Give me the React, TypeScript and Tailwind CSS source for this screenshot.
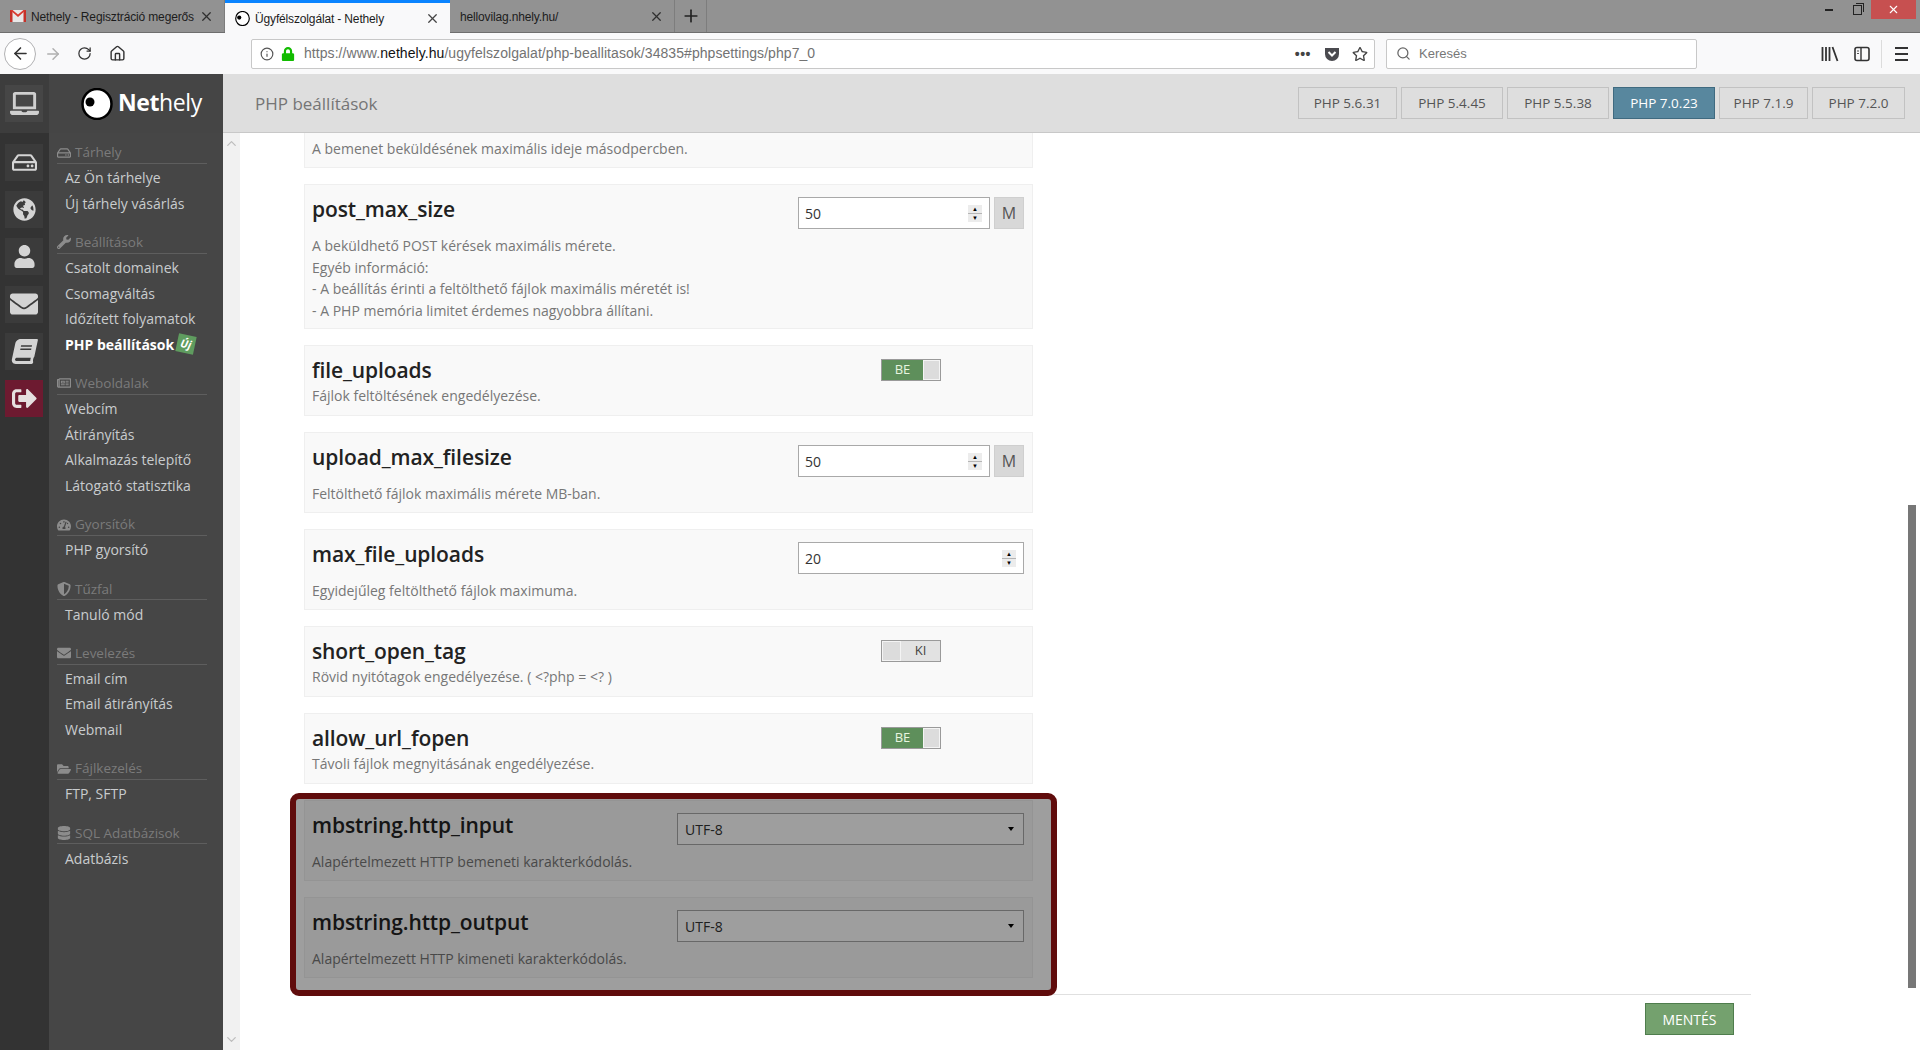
import type { ReactNode } from "react";
import {
  FaBook,
  FaDatabase,
  FaEnvelope,
  FaFolderOpen,
  FaGlobeAmericas,
  FaLaptop,
  FaLock,
  FaRegHdd,
  FaRegNewspaper,
  FaRegStar,
  FaShieldAlt,
  FaSignOutAlt,
  FaTachometerAlt,
  FaUser,
  FaWrench,
} from "react-icons/fa";
import { FiSearch } from "react-icons/fi";
import {
  LuArrowLeft,
  LuArrowRight,
  LuChevronDown,
  LuChevronUp,
  LuHouse,
  LuInfo,
  LuPlus,
  LuRotateCw,
  LuX,
} from "react-icons/lu";

const browserFont = "font-['Liberation_Sans',sans-serif]";
const pageFont = "font-['Open_Sans',sans-serif]";

// small eye logo, used in the tab and in the sidebar
const EyeLogo = ({ className }: { className: string }) => (
  <svg viewBox="0 0 32 32" className={className}>
    <ellipse cx="16" cy="16" rx="14.5" ry="15" fill="#fff" stroke="#000" strokeWidth="2.5" />
    <circle cx="9" cy="14" r="4.5" fill="#000" />
  </svg>
);

const GmailIcon = () => (
  <svg viewBox="0 0 16 12" className="h-[12px] w-[16px] shrink-0">
    <rect width="16" height="12" fill="#e8e8e8" />
    <path d="M0 0h2.5v12H0zM13.5 0H16v12h-2.5z" fill="#c5322a" />
    <path d="M0 0h2.5L8 4.5 13.5 0H16L8 7z" fill="#d93a30" />
  </svg>
);

const PocketIcon = () => (
  <svg viewBox="0 0 16 16" className="h-[16px] w-[16px]">
    <path d="M1 2h14v6a7 7 0 0 1-14 0z" fill="#4a4a4f" />
    <path d="M4.5 6 8 9.5 11.5 6" fill="none" stroke="#fff" strokeWidth="2" />
  </svg>
);

const LibraryIcon = () => (
  <svg viewBox="0 0 18 16" className="h-[16px] w-[18px]">
    <path d="M1.5 1v14M5 1v14M8.5 1v14M11.5 1l5 14" stroke="#333" strokeWidth="1.8" fill="none" />
  </svg>
);

const SidebarIcon = () => (
  <svg viewBox="0 0 16 16" className="h-[16px] w-[16px]">
    <rect x="1" y="1.5" width="14" height="13" rx="2" fill="none" stroke="#333" strokeWidth="1.6" />
    <path d="M7 2v12" stroke="#333" strokeWidth="1.4" />
    <path d="M3 5h2M3 7.5h2" stroke="#555" strokeWidth="1" />
  </svg>
);

type TabProps = {
  icon?: ReactNode;
  title: string;
  active?: boolean;
};

const BrowserTab = ({ icon, title, active }: TabProps) => (
  <div
    className={`flex w-[225px] items-center pl-[10px] pr-[10px] ${
      active ? "h-[33px] border-t-[3px] border-[#0a84ff] bg-[#f9f9fa]" : "h-[32px] border-r border-[#7d7d7d]"
    }`}
  >
    {icon}
    <span
      className={`flex-1 whitespace-nowrap pt-px text-[12px] tracking-[-0.15px] text-[#1c1c1c] ${
        icon ? "ml-[5px]" : ""
      }`}
    >
      {title}
    </span>
    <LuX className={`ml-[4px] shrink-0 text-[15px] ${active ? "text-[#444]" : "text-[#2f2f2f]"}`} />
  </div>
);

const BrowserChrome = () => (
  <div className={browserFont}>
    <div className="flex h-[33px] items-start border-b border-[#6e6e6e] bg-[#929292]">
      <BrowserTab icon={<GmailIcon />} title="Nethely - Regisztráció megerős" />
      <BrowserTab icon={<EyeLogo className="h-[15px] w-[15px] shrink-0" />} title="Ügyfélszolgálat - Nethely" active />
      <BrowserTab title="hellovilag.nhely.hu/" />
      <div className="flex h-[32px] w-[32px] items-center justify-center border-r border-[#7d7d7d]">
        <LuPlus className="text-[20px] text-[#222]" />
      </div>
      <div className="ml-auto mr-[4px] flex h-[19px] items-center">
        <div className="mr-[20px] h-[2px] w-[8px] bg-[#222]" />
        <div className="relative mr-[9px] h-[10px] w-[9px] border border-[#222]">
          <div className="absolute -right-[3px] -top-[3px] h-[9px] w-[8px] border-r border-t border-[#222]" />
        </div>
        <div className="flex h-[19px] w-[45px] items-center justify-center bg-[#c75050]">
          <LuX className="text-[13px] text-white" />
        </div>
      </div>
    </div>
    <div className="flex h-[41px] items-center bg-[#f9f9fa] pl-[4px]">
      <div className="flex h-[32px] w-[32px] items-center justify-center rounded-full border border-[#b1b1b3] bg-white">
        <LuArrowLeft className="text-[19px] text-[#333]" />
      </div>
      <LuArrowRight className="ml-[8px] text-[18px] text-[#b0b0b0]" />
      <LuRotateCw className="ml-[15px] text-[15px] text-[#333]" />
      <LuHouse className="ml-[17px] text-[17px] text-[#333]" />
      <div className="ml-[125px] flex h-[30px] w-[1124px] items-center rounded-[2px] border border-[#c8c8c8] bg-white pl-[8px]">
        <LuInfo className="text-[14px] text-[#555]" />
        <FaLock className="ml-[7px] text-[14px] text-[#12bc00]" />
        <span className="ml-[9px] whitespace-nowrap text-[14px] tracking-[0.06px] text-[#737373]">
          https://www.<span className="text-[#111]">nethely.hu</span>/ugyfelszolgalat/php-beallitasok/34835#phpsettings/php7_0
        </span>
        <div className="ml-auto flex items-center pr-[6px]">
          <span className="mr-[13px] text-[14px] font-bold leading-none tracking-[0.5px] text-[#444]">•••</span>
          <PocketIcon />
          <FaRegStar className="ml-[12px] text-[16px] text-[#444]" />
        </div>
      </div>
      <div className="ml-[11px] flex h-[30px] w-[311px] items-center rounded-[2px] border border-[#c8c8c8] bg-white pl-[9px]">
        <FiSearch className="text-[15px] text-[#666]" />
        <span className="ml-[8px] text-[13px] text-[#777]">Keresés</span>
      </div>
      <div className="ml-[124px]">
        <LibraryIcon />
      </div>
      <div className="ml-[15px]">
        <SidebarIcon />
      </div>
      <div className="ml-[11px] h-[28px] w-px bg-[#dcdcdc]" />
      <div className="ml-[13px] flex w-[13px] flex-col gap-[4px]">
        <div className="h-[2px] bg-[#333]" />
        <div className="h-[2px] bg-[#333]" />
        <div className="h-[2px] bg-[#333]" />
      </div>
    </div>
  </div>
);

const railIcons = [
  { key: "hdd", icon: <FaRegHdd className="text-[25px]" /> },
  { key: "globe", icon: <FaGlobeAmericas className="text-[23px]" /> },
  { key: "user", icon: <FaUser className="text-[23px]" /> },
  { key: "mail", icon: <FaEnvelope className="text-[28px]" /> },
  { key: "book", icon: <FaBook className="-skew-x-[12deg] text-[25px]" /> },
];

const IconRail = () => (
  <div className="flex h-full w-[49px] shrink-0 flex-col items-start gap-[10.2px] bg-[#333333] pl-[5px] pt-[11px]">
    {railIcons.map((item) => (
      <div key={item.key} className="flex h-[37px] w-[38px] items-center justify-center bg-[#3b3b3b] text-[#d4d4d4]">
        {item.icon}
      </div>
    ))}
    <div className="flex h-[37px] w-[38px] items-center justify-center bg-[#6d1a30] text-[#e6e0e0]">
      <FaSignOutAlt className="text-[25px]" />
    </div>
  </div>
);

type MenuGroup = {
  label: string;
  icon: ReactNode;
  items: string[];
};

const menu: MenuGroup[] = [
  { label: "Tárhely", icon: <FaRegHdd />, items: ["Az Ön tárhelye", "Új tárhely vásárlás"] },
  {
    label: "Beállítások",
    icon: <FaWrench />,
    items: ["Csatolt domainek", "Csomagváltás", "Időzített folyamatok", "PHP beállítások"],
  },
  {
    label: "Weboldalak",
    icon: <FaRegNewspaper />,
    items: ["Webcím", "Átirányítás", "Alkalmazás telepítő", "Látogató statisztika"],
  },
  { label: "Gyorsítók", icon: <FaTachometerAlt />, items: ["PHP gyorsító"] },
  { label: "Tűzfal", icon: <FaShieldAlt />, items: ["Tanuló mód"] },
  { label: "Levelezés", icon: <FaEnvelope />, items: ["Email cím", "Email átirányítás", "Webmail"] },
  { label: "Fájlkezelés", icon: <FaFolderOpen />, items: ["FTP, SFTP"] },
  { label: "SQL Adatbázisok", icon: <FaDatabase />, items: ["Adatbázis"] },
];

const Sidebar = () => (
  <div className={`flex h-full w-[191px] shrink-0 ${pageFont}`}>
    <div className="w-[174px] bg-[#464646] pl-[8px] pr-[16px] pt-[9px]">
      {menu.map((group) => (
        <div key={group.label} className="mb-[15.7px]">
          <div className="flex h-[22px] items-center gap-[4px] border-b border-[#5e5e5e] text-[13.5px] text-[#7b7b7b]">
            <span className="text-[14px] text-[#8c8c8c]">{group.icon}</span>
            {group.label}
          </div>
          <div className="pl-[8px] pt-px">
            {group.items.map((item) =>
              item === "PHP beállítások" ? (
                <div key={item} className="flex h-[25.6px] items-center text-[14px] font-bold text-white">
                  {item}
                  <span className="ml-[3px] flex h-[18px] w-[18px] rotate-[12deg] items-center justify-center bg-[#5f9c5f] text-[11px] italic">
                    Új
                  </span>
                </div>
              ) : (
                <div key={item} className="flex h-[25.6px] items-center text-[14px] text-[#c9ccce]">
                  {item}
                </div>
              )
            )}
          </div>
        </div>
      ))}
    </div>
    <div className="flex w-[17px] flex-col items-center justify-between bg-[#f1f1f1] py-[3px] text-[15px] leading-none text-[#bdbdbd]">
      <LuChevronUp />
      <LuChevronDown />
    </div>
  </div>
);

const phpVersions = [
  { label: "PHP 5.6.31", width: "w-[99px]" },
  { label: "PHP 5.4.45", width: "w-[102px]" },
  { label: "PHP 5.5.38", width: "w-[102px]" },
  { label: "PHP 7.0.23", width: "w-[102px]", active: true },
  { label: "PHP 7.1.9", width: "w-[89px]" },
  { label: "PHP 7.2.0", width: "w-[93px]" },
];

const TopBar = () => (
  <div className={`flex h-[59px] shrink-0 ${pageFont}`}>
    <div className="flex w-[49px] shrink-0 items-center bg-[#3d3d3d] pl-[5px]">
      <div className="flex h-[37px] w-[38px] items-center justify-center bg-[#464646] text-[#cfcfcf]">
        <FaLaptop className="text-[29px]" />
      </div>
    </div>
    <div className="flex w-[174px] shrink-0 items-center bg-[#454545] pl-[32px]">
      <EyeLogo className="h-[32px] w-[32px]" />
      <span className="mb-[2px] ml-[5px] text-[23px] leading-none tracking-[-0.4px] text-white">
        <span className="font-bold">Net</span>hely
      </span>
    </div>
    <div className="flex flex-1 items-center justify-between border-b border-[#c8c8c8] bg-[#dedede] pl-[32px] pr-[15px]">
      <span className="pt-px text-[17px] text-[#757575]">PHP beállítások</span>
      <div className="flex gap-[4px]">
        {phpVersions.map((v) => (
          <div
            key={v.label}
            className={`flex h-[32px] items-center justify-center border text-[13.5px] ${v.width} ${
              v.active ? "border-[#3f6a80] bg-[#58879e] text-white" : "border-[#c2c2c2] text-[#555]"
            }`}
          >
            {v.label}
          </div>
        ))}
      </div>
    </div>
  </div>
);

const NumberInput = ({ value, width }: { value: string; width: string }) => (
  <div className={`flex h-[32px] items-center justify-between border border-[#a9a9a9] bg-white pl-[6px] pr-[7px] text-[14px] text-[#333] ${width}`}>
    {value}
    <div className="flex h-[17px] w-[14px] flex-col justify-between bg-[#b5b5b5]">
      <div className="flex h-[8px] items-center justify-center bg-[#ececec] text-[6px] leading-none text-black">▲</div>
      <div className="flex h-[8px] items-center justify-center bg-[#ececec] text-[6px] leading-none text-black">▼</div>
    </div>
  </div>
);

const UnitInput = ({ value }: { value: string }) => (
  <div className="flex gap-[4px]">
    <NumberInput value={value} width="w-[192px]" />
    <div className="flex h-[32px] w-[30px] items-center justify-center border border-[#cfcfcf] bg-[#d8d8d8] text-[16px] text-[#555]">
      M
    </div>
  </div>
);

const Toggle = ({ on }: { on: boolean }) => (
  <div className="mt-[2px] flex h-[22px] w-[60px] border border-[#9a9a9a] bg-[#e2e2e2] text-[13px]">
    {on ? (
      <>
        <div className="flex w-[41px] items-center justify-center bg-[#5e8f5b] text-[#e8f5e0]">BE</div>
        <div className="flex-1 border border-[#f4f4f4] bg-[#dcdcdc]" />
      </>
    ) : (
      <>
        <div className="w-[19px] border border-[#f4f4f4] bg-[#dcdcdc]" />
        <div className="flex flex-1 items-center justify-center text-[#444]">KI</div>
      </>
    )}
  </div>
);

const SelectBox = () => (
  <div className="flex h-[32px] w-[347px] items-center justify-between border border-[#a9a9a9] bg-white pl-[7px] pr-[9px] text-[14px] text-[#333]">
    UTF-8
    <div className="h-0 w-0 border-x-[3px] border-t-[4px] border-x-transparent border-t-black" />
  </div>
);

type SettingProps = {
  title: string;
  control: ReactNode;
  height: string;
  lines: string[];
  wideControl?: boolean;
};

const SettingCard = ({ title, control, height, lines, wideControl }: SettingProps) => (
  <div className={`border border-[#efefef] bg-[#f9f9f9] pl-[7px] pr-[7px] pt-[11px] ${height}`}>
    <div className="flex items-start justify-between">
      <span className="-mt-px text-[21px] font-semibold leading-[28px] tracking-[-0.1px] text-[#222]">{title}</span>
      {wideControl ? (
        <div className="mr-px mt-px">{control}</div>
      ) : (
        <div className="mr-px flex w-[226px] justify-center">{control}</div>
      )}
    </div>
    <div className={`text-[14px] leading-[21.5px] text-[#777] ${wideControl ? "mt-[6px]" : "mt-[1px]"}`}>
      {lines.map((line) => (
        <div key={line}>{line}</div>
      ))}
    </div>
  </div>
);

const SettingsList = () => (
  <div className="flex w-[729px] flex-col gap-[16px]">
    <div className="h-[35px] border-x border-b border-[#efefef] bg-[#f9f9f9] px-[7px] pt-[5px] text-[14px] leading-[21.5px] text-[#777]">
      A bemenet beküldésének maximális ideje másodpercben.
    </div>
    <SettingCard
      title="post_max_size"
      height="h-[145px]"
      wideControl
      control={<UnitInput value="50" />}
      lines={[
        "A beküldhető POST kérések maximális mérete.",
        "Egyéb információ:",
        "- A beállítás érinti a feltölthető fájlok maximális méretét is!",
        "- A PHP memória limitet érdemes nagyobbra állítani.",
      ]}
    />
    <SettingCard
      title="file_uploads"
      height="h-[71px]"
      control={<Toggle on />}
      lines={["Fájlok feltöltésének engedélyezése."]}
    />
    <SettingCard
      title="upload_max_filesize"
      height="h-[81px]"
      wideControl
      control={<UnitInput value="50" />}
      lines={["Feltölthető fájlok maximális mérete MB-ban."]}
    />
    <SettingCard
      title="max_file_uploads"
      height="h-[81px]"
      wideControl
      control={<NumberInput value="20" width="w-[226px]" />}
      lines={["Egyidejűleg feltölthető fájlok maximuma."]}
    />
    <SettingCard
      title="short_open_tag"
      height="h-[71px]"
      control={<Toggle on={false} />}
      lines={["Rövid nyitótagok engedélyezése. ( <?php = <? )"]}
    />
    <SettingCard
      title="allow_url_fopen"
      height="h-[71px]"
      control={<Toggle on />}
      lines={["Távoli fájlok megnyitásának engedélyezése."]}
    />
    {/* highlighted block, the dark frame lies over the two cards */}
    <div className="relative flex flex-col gap-[16px]">
      <SettingCard
        title="mbstring.http_input"
        height="h-[81px]"
        wideControl
        control={<SelectBox />}
        lines={["Alapértelmezett HTTP bemeneti karakterkódolás."]}
      />
      <SettingCard
        title="mbstring.http_output"
        height="h-[81px]"
        wideControl
        control={<SelectBox />}
        lines={["Alapértelmezett HTTP kimeneti karakterkódolás."]}
      />
      <div className="absolute -bottom-[18px] -left-[14px] -right-[24px] -top-[7px] z-10 rounded-[9px] border-[6px] border-[#600c0c] bg-black/[0.38]" />
    </div>
  </div>
);

const App = () => (
  <div className="flex h-[1050px] w-[1920px] flex-col overflow-hidden bg-white">
    <BrowserChrome />
    <TopBar />
    <div className="flex min-h-0 flex-1">
      <IconRail />
      <Sidebar />
      <div className={`min-w-0 flex-1 pl-[64px] ${pageFont}`}>
        <SettingsList />
        <div className="mt-[16px] w-[1447px] border-t border-[#e0e0e0] pr-[17px] pt-[8px]">
          <div className="ml-auto flex h-[32px] w-[89px] items-center justify-center border border-[#4f7d4d] bg-[#74a16e] text-[14px] text-white">
            MENTÉS
          </div>
        </div>
      </div>
      <div className="w-[12px] shrink-0 pt-[372px]">
        <div className="h-[483px] w-[8px] bg-[#777]" />
      </div>
    </div>
  </div>
);

export default App;
